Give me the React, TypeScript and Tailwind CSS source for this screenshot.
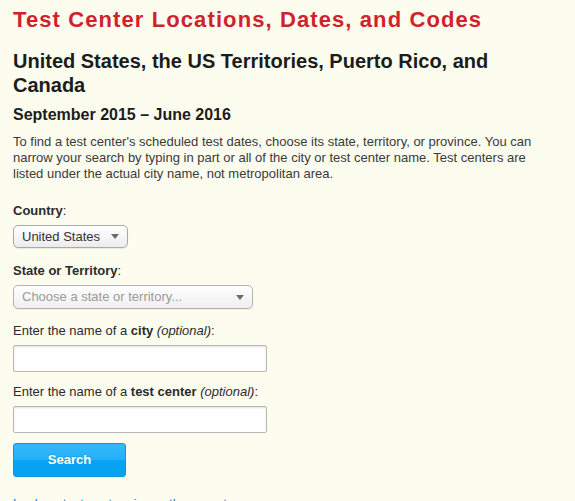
import React from 'react';

const Caret = () => (
  <svg width="8" height="5" viewBox="0 0 8 5" className="shrink-0">
    <path d="M0 0 H8 L4 5 Z" fill="#6b6b6b" />
  </svg>
);

const Label = ({ children }: { children: React.ReactNode }) => (
  <label className="block text-[13px] leading-4 text-[#2b2b2b]">{children}</label>
);

const App = () => {
  return (
    <div className="min-h-[501px] bg-[#fcfcef] pl-[13px] pr-[20px] pt-[7px] font-['Liberation_Sans',Arial,sans-serif]">
      <h1 className="text-[22px] font-bold leading-[26px] tracking-[1.1px] text-[#d1222b]">
        Test Center Locations, Dates, and Codes
      </h1>
      <h2 className="mt-[16px] text-[20px] font-bold leading-6 text-[#1c1c1c]">
        United States, the US Territories, Puerto Rico, and Canada
      </h2>
      <h3 className="mt-[8px] text-[16px] font-bold leading-5 text-[#1c1c1c]">
        September 2015 – June 2016
      </h3>
      <p className="mt-[9px] text-[13px] leading-4 text-[#3a3a3a]">
        To find a test center's scheduled test dates, choose its state, territory, or province. You can
        narrow your search by typing in part or all of the city or test center name. Test centers are
        listed under the actual city name, not metropolitan area.
      </p>

      <form className="mt-[21px]" onSubmit={e => e.preventDefault()}>
        <Label>
          <span className="font-bold">Country</span>:
        </Label>
        <div className="mt-[6px] flex h-[23px] w-[115px] items-center justify-between rounded-[5px] border border-[#a9a9a9] bg-gradient-to-b from-white to-[#ececec] pl-[8px] pr-[8px] text-[13px] text-[#333] shadow-[0_1px_1px_rgba(0,0,0,0.08)]">
          <span>United States</span>
          <Caret />
        </div>

        <div className="mt-[15px]">
          <Label>
            <span className="font-bold">State or Territory</span>:
          </Label>
        </div>
        <div className="mt-[6px] flex h-[24px] w-[240px] items-center justify-between rounded-[5px] border border-[#b3b3b3] bg-gradient-to-b from-white to-[#efefef] pl-[8px] pr-[8px] text-[13px] text-[#9a9a9a] shadow-[0_1px_1px_rgba(0,0,0,0.06)]">
          <span>Choose a state or territory...</span>
          <Caret />
        </div>

        <div className="mt-[14px]">
          <Label>
            Enter the name of a <span className="font-bold">city</span> <i>(optional)</i>:
          </Label>
        </div>
        <input
          type="text"
          className="mt-[6px] block h-[27px] w-[254px] rounded-[2px] border border-[#b8b8b8] bg-white shadow-[inset_0_1px_2px_rgba(0,0,0,0.12)] outline-none"
        />

        <div className="mt-[12px]">
          <Label>
            Enter the name of a <span className="font-bold">test center</span> <i>(optional)</i>:
          </Label>
        </div>
        <input
          type="text"
          className="mt-[6px] block h-[27px] w-[254px] rounded-[2px] border border-[#b8b8b8] bg-white shadow-[inset_0_1px_2px_rgba(0,0,0,0.12)] outline-none"
        />

        <button
          type="submit"
          className="mt-[10px] block h-[34px] w-[113px] rounded-[3px] border border-[#0b97dd] bg-[linear-gradient(to_bottom,#35b9fb_0%,#22b0f8_50%,#07a5f4_50%,#05a2f2_100%)] text-[13px] font-bold text-white [text-shadow:0_-1px_0_rgba(0,0,0,0.15)]"
        >
          Search
        </button>
      </form>

      <a href="#" className="mt-[19px] block text-[13px] leading-4 text-[#1a79cf]">
        Look up test centers in another country
      </a>
    </div>
  );
};

export default App;
